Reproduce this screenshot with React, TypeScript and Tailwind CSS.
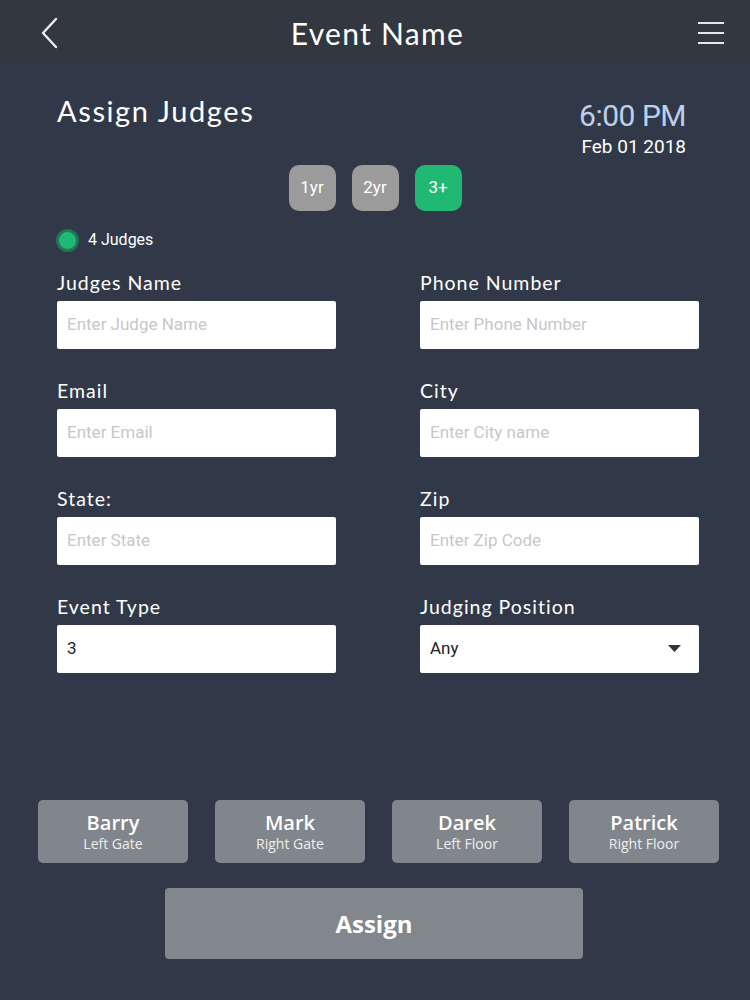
import React from 'react';

const judges = [
  { name: 'Barry', spot: 'Left Gate' },
  { name: 'Mark', spot: 'Right Gate' },
  { name: 'Darek', spot: 'Left Floor' },
  { name: 'Patrick', spot: 'Right Floor' },
];

const Field = ({ label, placeholder, value, select }: { label: string; placeholder?: string; value?: string; select?: boolean }) => (
  <div className="flex flex-col">
    <label className="h-[28px] mb-[4px] text-[19.5px] leading-[28px] text-white font-['Lato',sans-serif] tracking-[1px]">{label}</label>
    <div className="relative h-[48px] bg-white rounded-[2px] flex items-center px-[10px]">
      {value ? (
        <span className="text-[17px] text-[#222] font-['Roboto',sans-serif]">{value}</span>
      ) : (
        <span className="text-[17px] text-[#c7c7c7] font-['Roboto',sans-serif]">{placeholder}</span>
      )}
      {select && (
        <svg className="absolute right-[18px] top-[20px]" width="13" height="8" viewBox="0 0 13 8">
          <path d="M0 0 L13 0 L6.5 7 Z" fill="#333" />
        </svg>
      )}
    </div>
  </div>
);

export default function App() {
  return (
    <div className="w-[750px] h-[1000px] bg-[#313949] flex flex-col">
      {/* top bar */}
      <header className="h-[66px] bg-[#33373f] flex items-center justify-between px-[40px] pr-[25px]">
        <svg width="18" height="32" viewBox="0 0 18 32">
          <path d="M16 2 L3 16 L16 30" fill="none" stroke="#eeeeee" strokeWidth="2.4" strokeLinecap="round" strokeLinejoin="round" />
        </svg>
        <h1 className="text-[30px] text-white font-['Lato',sans-serif] tracking-[1.3px]">Event Name</h1>
        <svg width="28" height="24" viewBox="0 0 28 24">
          <path d="M1 2 H27 M1 12 H27 M1 22 H27" stroke="#e6e6e6" strokeWidth="2.2" />
        </svg>
      </header>

      <div className="pl-[57px] pr-[51px] pt-[27px]">
        <div className="flex justify-between items-start">
          <h2 className="text-[29px] leading-[36px] text-white font-['Lato',sans-serif] tracking-[1.6px]">Assign Judges</h2>
          <div className="flex flex-col items-end mt-[6px] mr-[13px]">
            <span className="text-[30px] leading-[34px] text-[#bcd0ec] font-['Roboto',sans-serif] tracking-[-0.5px]">6:00 PM</span>
            <span className="text-[19px] leading-[24px] text-white font-['Roboto',sans-serif] mt-[2px]">Feb 01 2018</span>
          </div>
        </div>

        <div className="flex justify-center gap-[16px] mt-[6px] -ml-[57px] -mr-[51px]">
          <button className="w-[47px] h-[46px] rounded-[10px] bg-[#9b9b9b] text-white text-[17px] font-['Roboto',sans-serif]">1yr</button>
          <button className="w-[47px] h-[46px] rounded-[10px] bg-[#9b9b9b] text-white text-[17px] font-['Roboto',sans-serif]">2yr</button>
          <button className="w-[47px] h-[46px] rounded-[10px] bg-[#21b873] text-white text-[17px] font-['Roboto',sans-serif]">3+</button>
        </div>

        <div className="flex items-center gap-[10px] mt-[19px] h-[20px]">
          <span className="w-[21px] h-[21px] rounded-full bg-[#21b873] border-2 border-[#1a7d55] ring-1 ring-[#21b873]/40" />
          <span className="text-[16px] text-white font-['Roboto',sans-serif]">4 Judges</span>
        </div>

        <div className="grid grid-cols-2 gap-x-[84px] gap-y-[28px] mt-[19px]">
          <Field label="Judges Name" placeholder="Enter Judge Name" />
          <Field label="Phone Number" placeholder="Enter Phone Number" />
          <Field label="Email" placeholder="Enter Email" />
          <Field label="City" placeholder="Enter City name" />
          <Field label="State:" placeholder="Enter State" />
          <Field label="Zip" placeholder="Enter Zip Code" />
          <Field label="Event Type" value="3" />
          <Field label="Judging Position" value="Any" select />
        </div>
      </div>

      <div className="mt-[127px] px-[38px] pr-[31px] grid grid-cols-4 gap-[27px]">
        {judges.map((j) => (
          <div key={j.name} className="h-[63px] rounded-[5px] bg-[#80868c] flex flex-col items-center justify-center font-['Open_Sans',sans-serif] text-white">
            <span className="text-[20px] leading-[24px] font-semibold">{j.name}</span>
            <span className="text-[14px] leading-[18px] text-[#eeeeee]">{j.spot}</span>
          </div>
        ))}
      </div>

      <div className="flex justify-center mt-[25px] pr-[2px]">
        <button className="w-[418px] h-[71px] rounded-[4px] bg-[#81878d] text-white text-[24px] font-bold font-['Open_Sans',sans-serif]">Assign</button>
      </div>
    </div>
  );
}
